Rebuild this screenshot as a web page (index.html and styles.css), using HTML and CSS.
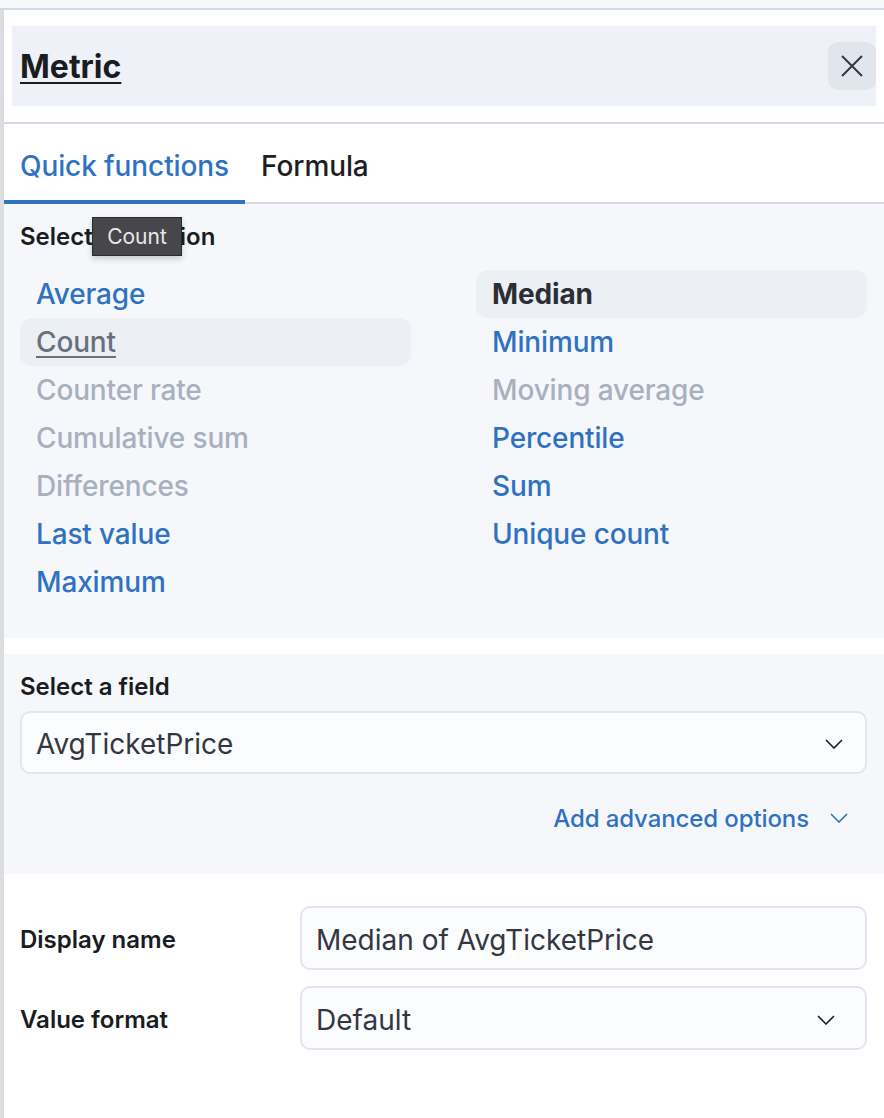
FILE: index.html
```html
<!DOCTYPE html>
<html>
<head>
<meta charset="utf-8">
<link rel="stylesheet" href="styles.css">
</head>
<body>
<div class="topbar"></div>
<div class="frame">
  <div class="strip"></div>
  <div class="panel">
    <div class="header-wrap">
      <div class="header">
        <h1 class="title">Metric</h1>
        <button class="close" aria-label="Close">
          <svg width="22" height="22" viewBox="0 0 22 22"><path d="M1 1 L21 21 M21 1 L1 21" stroke="#343741" stroke-width="2" fill="none"/></svg>
        </button>
      </div>
    </div>
    <div class="tabs">
      <div class="tab active">Quick functions</div>
      <div class="tab">Formula</div>
    </div>
    <section class="functions">
      <div class="label">Select a function</div>
      <div class="tooltip">Count</div>
      <div class="grid">
        <div class="col">
          <div class="item link">Average</div>
          <div class="item hover">Count</div>
          <div class="item disabled">Counter rate</div>
          <div class="item disabled">Cumulative sum</div>
          <div class="item disabled">Differences</div>
          <div class="item link">Last value</div>
          <div class="item link">Maximum</div>
        </div>
        <div class="col">
          <div class="item selected">Median</div>
          <div class="item link">Minimum</div>
          <div class="item disabled">Moving average</div>
          <div class="item link">Percentile</div>
          <div class="item link">Sum</div>
          <div class="item link">Unique count</div>
        </div>
      </div>
    </section>
    <section class="field">
      <div class="label">Select a field</div>
      <div class="input select">
        <span>AvgTicketPrice</span>
        <svg class="chev" width="18" height="10" viewBox="0 0 18 10"><path d="M1 1 L9 9 L17 1" stroke="#1a1c21" stroke-width="1.6" fill="none"/></svg>
      </div>
      <div class="advanced">
        <span>Add advanced options</span>
        <svg width="18" height="10" viewBox="0 0 18 10"><path d="M1 1 L9 9 L17 1" stroke="#2f72c2" stroke-width="1.6" fill="none"/></svg>
      </div>
    </section>
    <section class="settings">
      <div class="row">
        <div class="rlabel">Display name</div>
        <div class="input"><span>Median of AvgTicketPrice</span></div>
      </div>
      <div class="row">
        <div class="rlabel">Value format</div>
        <div class="input select">
          <span>Default</span>
          <svg class="chev" width="18" height="10" viewBox="0 0 18 10"><path d="M1 1 L9 9 L17 1" stroke="#1a1c21" stroke-width="1.6" fill="none"/></svg>
        </div>
      </div>
    </section>
  </div>
</div>
</body>
</html>
```

FILE: styles.css
```css
* { box-sizing: border-box; }
html, body { margin: 0; padding: 0; }
body {
  font-family: Inter, "Noto Sans", sans-serif;
  background: #ffffff;
  color: #343741;
  height: 1118px;
  overflow: hidden;
}
.topbar {
  height: 10px;
  background: #f7f8fc;
  border-bottom: 2px solid #d3dae6;
}
.frame {
  display: flex;
  min-height: 1108px;
}
.strip {
  width: 4px;
  background: #dcdde0;
  flex: none;
}
.panel {
  flex: 1;
  background: #fff;
  position: relative;
}
.header-wrap {
  padding: 16px 8px 16px 8px;
  border-bottom: 2px solid #d3dae6;
}
.header {
  height: 80px;
  background: #eef1f7;
  display: flex;
  align-items: center;
  justify-content: space-between;
  padding-left: 8px;
}
.title {
  margin: 0;
  font-size: 32px;
  font-weight: 700;
  color: #1a1c21;
  text-decoration: underline;
  text-decoration-thickness: 2px;
  text-underline-offset: 4px;
}
.close {
  width: 48px;
  height: 48px;
  border: none;
  border-radius: 10px;
  background: #e1e5ec;
  display: flex;
  align-items: center;
  justify-content: center;
  padding: 0;
}
.tabs {
  display: flex;
  height: 80px;
  border-bottom: 2px solid #d3dae6;
}
.tab {
  padding: 6px 16px 0 16px;
  display: flex;
  align-items: center;
  font-size: 28px;
  font-weight: 500;
  letter-spacing: -0.1px;
  color: #1d1e24;
  position: relative;
}
.tab.active {
  color: #2f72c2;
}
.tab.active::after {
  content: "";
  position: absolute;
  left: 0;
  right: 0;
  bottom: -2px;
  height: 4px;
  background: #2f72c2;
}
.functions {
  background: #f5f7fa;
  padding: 16px 17px 32px 16px;
  position: relative;
}
.label {
  font-size: 24px;
  font-weight: 600;
  color: #1a1c21;
  line-height: 34px;
  margin-bottom: 16px;
}
.tooltip {
  position: absolute;
  left: 88px;
  top: 13px;
  width: 90px;
  height: 39px;
  background: #47474b;
  border: 1px solid #2b2b2e;
  color: #e8e8ea;
  font-size: 21px;
  display: flex;
  align-items: center;
  justify-content: center;
  box-shadow: 0 3px 6px rgba(0,0,0,0.18);
}
.grid {
  display: grid;
  grid-template-columns: 1fr 1fr;
  column-gap: 65px;
}
.item {
  height: 48px;
  display: flex;
  align-items: center;
  padding-left: 16px;
  font-size: 28px;
  font-weight: 500;
  letter-spacing: -0.15px;
  border-radius: 12px;
}
.item.link { color: #2f72c2; }
.item.disabled { color: #a8b0be; }
.item.hover {
  background: #eceff4;
  color: #69707d;
  text-decoration: underline;
  text-decoration-thickness: 2px;
  text-underline-offset: 4px;
}
.item.selected {
  background: #eceff4;
  color: #2b2e36;
  font-weight: 700;
}
.field {
  background: #f5f7fa;
  margin-top: 16px;
  padding: 16px 17px 35px 16px;
}
.field .label { margin-bottom: 7px; }
.input {
  height: 63px;
  border: 2px solid #e3e6ef;
  border-radius: 10px;
  background: #fbfcfd;
  display: flex;
  align-items: center;
  justify-content: space-between;
  padding: 3px 22px 0 14px;
  font-size: 28px;
  color: #343741;
}
.advanced {
  margin-top: 23px;
  height: 42px;
  display: flex;
  align-items: center;
  justify-content: flex-end;
  gap: 21px;
  padding-right: 19px;
  font-size: 24px;
  font-weight: 500;
  letter-spacing: -0.1px;
  color: #2f72c2;
}
.settings {
  padding: 32px 17px 0 16px;
  display: flex;
  flex-direction: column;
  gap: 16px;
}
.row {
  display: flex;
  align-items: center;
}
.rlabel {
  width: 280px;
  flex: none;
  font-size: 24px;
  font-weight: 600;
  color: #1a1c21;
  padding-top: 2px;
}
.row .input {
  flex: 1;
  height: 64px;
  padding-right: 30px;
}
```
